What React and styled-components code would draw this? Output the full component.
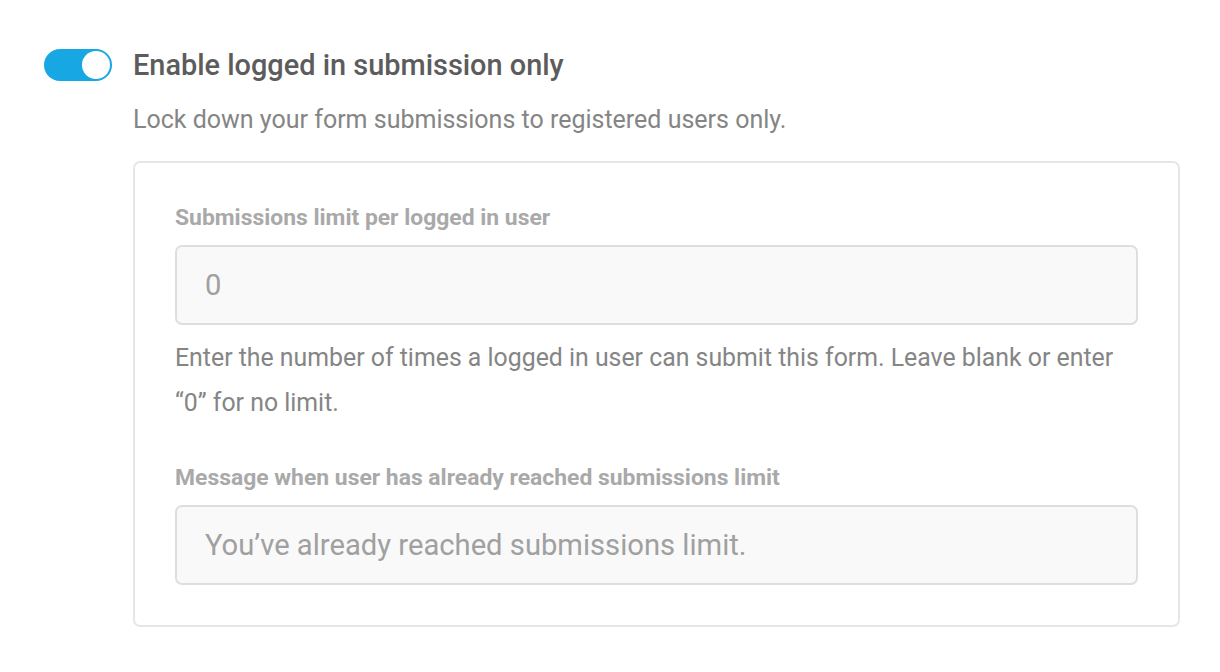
import React from "react";
import styled, { createGlobalStyle } from "styled-components";

const Global = createGlobalStyle`
  html, body { margin: 0; padding: 0; background: #fff; }
  body { font-family: Roboto, "Noto Sans", sans-serif; -webkit-font-smoothing: antialiased; }
`;

const Page = styled.div`
  padding: 46px 40px 40px 44px;
  display: flex;
  gap: 21px;
  align-items: flex-start;
`;

const Track = styled.div`
  flex: none;
  width: 68px;
  height: 32px;
  border-radius: 16px;
  background: ${(p) => (p.$on ? "#17a8e3" : "#ccc")};
  display: flex;
  align-items: center;
  justify-content: ${(p) => (p.$on ? "flex-end" : "flex-start")};
  padding: 2px;
  box-sizing: border-box;
  margin-top: 3px;
`;

const Knob = styled.div`
  width: 28px;
  height: 28px;
  border-radius: 50%;
  background: #fff;
`;

const Content = styled.div`
  flex: 1;
  display: flex;
  flex-direction: column;
`;

const Title = styled.h2`
  margin: 0;
  font-size: 28.9px;
  font-weight: 500;
  color: #5c5c5c;
  line-height: 38px;
`;

const Desc = styled.p`
  margin: 19px 0 0;
  font-size: 25px;
  color: #858585;
  line-height: 34px;
`;

const Panel = styled.div`
  margin-top: 24px;
  border: 2px solid #e6e6e6;
  border-radius: 7px;
  padding: 40px 40px 40px 40px;
  display: flex;
  flex-direction: column;
`;

const Field = styled.div`
  display: flex;
  flex-direction: column;
  & + & { margin-top: 38px; }
`;

const Label = styled.label`
  font-size: 22.9px;
  font-weight: 700;
  color: #a9a9a9;
  line-height: 30px;
`;

const Input = styled.div`
  margin-top: 12px;
  height: 80px;
  box-sizing: border-box;
  border: 2px solid #dedede;
  border-radius: 7px;
  background: #f9f9f9;
  padding: 0 28px;
  display: flex;
  align-items: center;
  font-size: 29.2px;
  color: #a0a0a0;
`;

const Help = styled.p`
  margin: 10px 0 0;
  font-size: 24.85px;
  line-height: 45px;
  color: #858585;
`;

export default function App() {
  return (
    <>
      <Global />
      <Page>
        <Track $on>
          <Knob />
        </Track>
        <Content>
          <Title>Enable logged in submission only</Title>
          <Desc>Lock down your form submissions to registered users only.</Desc>
          <Panel>
            <Field>
              <Label>Submissions limit per logged in user</Label>
              <Input>0</Input>
              <Help>
                Enter the number of times a logged in user can submit this form. Leave blank or enter
                “0” for no limit.
              </Help>
            </Field>
            <Field>
              <Label>Message when user has already reached submissions limit</Label>
              <Input>You’ve already reached submissions limit.</Input>
            </Field>
          </Panel>
        </Content>
      </Page>
    </>
  );
}
